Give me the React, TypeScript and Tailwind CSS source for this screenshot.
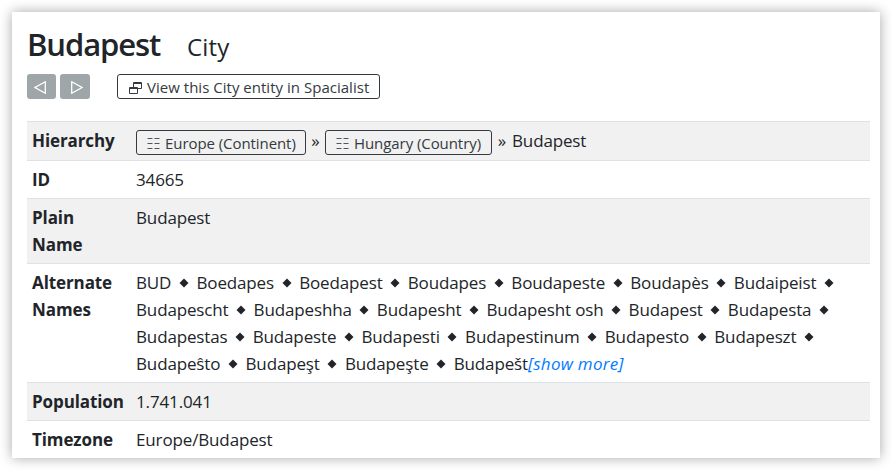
import type { ReactNode } from 'react';

const nameLines: { width: string; names: string[] }[] = [
  { width: 'w-[698px]', names: ['BUD', 'Boedapes', 'Boedapest', 'Boudapes', 'Boudapeste', 'Boudapès', 'Budaipeist'] },
  { width: 'w-[693px]', names: ['Budapescht', 'Budapeshha', 'Budapesht', 'Budapesht osh', 'Budapest', 'Budapesta'] },
  { width: 'w-[678px]', names: ['Budapestas', 'Budapeste', 'Budapesti', 'Budapestinum', 'Budapesto', 'Budapeszt'] },
];
const lastNames = ['Budapeŝto', 'Budapeşt', 'Budapeşte', 'Budapešt'];

function Diamond() {
  return (
    <svg className="h-[10px] w-[10px] shrink-0" viewBox="0 0 10 10">
      <path d="M5 .5 9.500 5 5 9.500.5 5Z" fill="#212529" />
    </svg>
  );
}

function ListIcon() {
  return (
    <svg className="mt-[2px] mr-[5px] h-[12px] w-[13px] shrink-0" viewBox="0 0 13 12" fill="none" stroke="#51565b">
      <path d="M.5 .5h5M7.500 .5h5M.5 5.500h5M7.500 5.500h5M.5 10.500h5M7.500 10.500h5" />
    </svg>
  );
}

function WindowsIcon() {
  return (
    <svg className="mt-[3px] mr-[5px] h-[12px] w-[13px] shrink-0" viewBox="0 0 13 12" fill="none" stroke="#343a40">
      <path d="M4.500 5V.5h8v6H9M4.500 1.500h8M.5 5.500h8v6h-8ZM.5 6.500h8" />
    </svg>
  );
}

function Row({ label, shaded, height, children }: { label: string; shaded?: boolean; height: string; children: ReactNode }) {
  return (
    <div className={`flex border-t border-[#dee2e6] pt-[5px] pl-[5px] ${height} ${shaded ? 'bg-[#f1f1f1]' : ''}`}>
      <div className="w-[104px] shrink-0 pr-[10px] text-[17px] font-bold tracking-[-0.1px]">{label}</div>
      <div className="min-w-0 grow whitespace-nowrap">{children}</div>
    </div>
  );
}

function Crumb({ width, children }: { width: string; children: ReactNode }) {
  return (
    <button className={`mt-[3px] flex h-[25px] items-center rounded-[3px] border border-[#343a40] pt-[1px] pl-[10px] text-[15px] leading-[20px] tracking-[-0.07px] text-[#343a40] ${width}`}>
      <ListIcon />
      {children}
    </button>
  );
}

export default function App() {
  return (
    <div className="h-[470px] w-[892px] overflow-hidden bg-white p-[12px] font-['Open_Sans','Noto_Sans',sans-serif] text-[17px] leading-[27px] tracking-[-0.14px] text-[#212529]">
      <main className="h-[446px] w-[868px] overflow-hidden bg-white pr-[10px] pl-[15px] shadow-[0_0_12px_rgba(0,0,0,0.35)]">
        <h1 className="flex h-[62px] items-baseline pt-[12px] leading-[40px]">
          <span className="w-[160px] text-[31px] font-semibold tracking-[-1.1px]">Budapest</span>
          <span className="text-[24px] tracking-[0.2px]">City</span>
        </h1>
        <div className="flex h-[47px]">
          <button className="mr-[4px] flex h-[25px] w-[29px] items-center justify-center rounded-[3px] bg-[#9fa6a9]">
            <svg className="mt-[2px] mr-[3px] h-[13px] w-[12px]" viewBox="0 0 12 13" fill="none" stroke="white" strokeWidth="1.3">
              <path d="M11.300 .8v11.400L1 6.500Z" />
            </svg>
          </button>
          <button className="mr-[27px] flex h-[25px] w-[30px] items-center justify-center rounded-[3px] bg-[#9fa6a9]">
            <svg className="mt-[2px] ml-[4px] h-[13px] w-[12px]" viewBox="0 0 12 13" fill="none" stroke="white" strokeWidth="1.3">
              <path d="M.7 .8v11.400L11 6.500Z" />
            </svg>
          </button>
          <button className="flex h-[25px] w-[263px] items-center rounded-[3px] border border-[#343a40] pl-[11px] text-[15px] leading-[20px] tracking-[0.02px] whitespace-nowrap text-[#343a40]">
            <WindowsIcon />
            View this City entity in Spacialist
          </button>
        </div>
        <section className="w-[843px]">
          <Row label="Hierarchy" shaded height="h-[39px]">
            <div className="flex">
              <Crumb width="w-[170px]">Europe (Continent)</Crumb>
              <span className="w-[19px] text-center">»</span>
              <Crumb width="w-[167px]">Hungary (Country)</Crumb>
              <span className="w-[20px] text-center">»</span>
              <span>Budapest</span>
            </div>
          </Row>
          <Row label="ID" height="h-[38px]">34665</Row>
          <Row label="Plain Name" shaded height="h-[65px]">Budapest</Row>
          <Row label="Alternate Names" height="h-[119px]">
            {nameLines.map((line) => (
              <div key={line.names[0]} className={`flex items-center justify-between ${line.width}`}>
                {line.names.flatMap((name) => [<span key={name}>{name}</span>, <Diamond key={`${name}-d`} />])}
              </div>
            ))}
            <div className="flex items-center">
              <div className="flex w-[392px] items-center justify-between">
                {lastNames.flatMap((name, i) =>
                  i === 0 ? [<span key={name}>{name}</span>] : [<Diamond key={`${name}-d`} />, <span key={name}>{name}</span>],
                )}
              </div>
              <a className="tracking-[0.27px] text-[#007bff] italic">[show more]</a>
            </div>
          </Row>
          <Row label="Population" shaded height="h-[38px]">1.741.041</Row>
          <Row label="Timezone" height="h-[38px]">Europe/Budapest</Row>
        </section>
      </main>
    </div>
  );
}
